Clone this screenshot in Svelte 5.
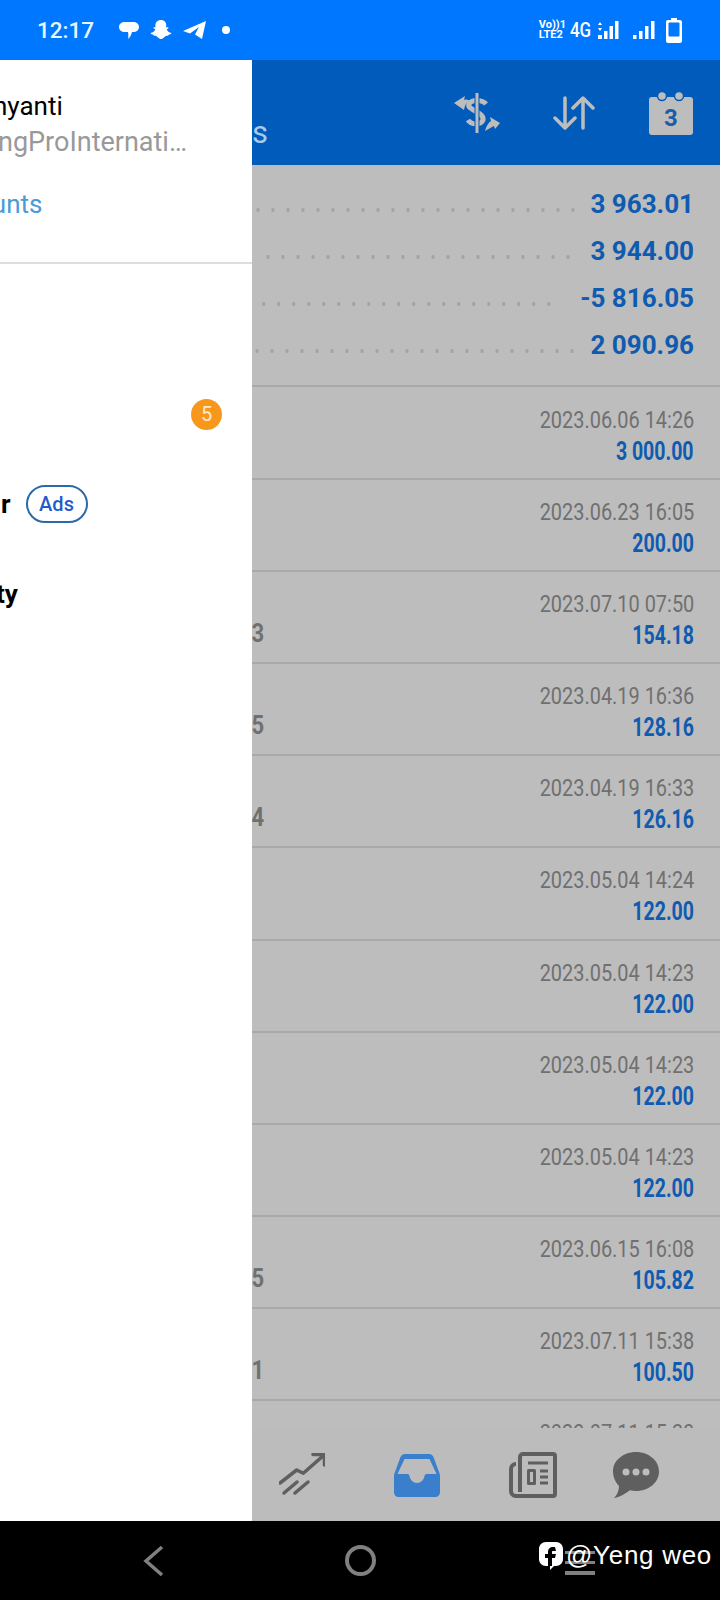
<script>
	const summary = [
		{ value: '3 963.01', gap: 10 },
		{ value: '3 944.00', gap: 15 },
		{ value: '-5 816.05', gap: 24 },
		{ value: '2 090.96', gap: 11 }
	];

	const deals = [
		{ tail: '', date: '2023.06.06 14:26', amount: '3 000.00' },
		{ tail: '', date: '2023.06.23 16:05', amount: '200.00' },
		{ tail: '3', date: '2023.07.10 07:50', amount: '154.18' },
		{ tail: '5', date: '2023.04.19 16:36', amount: '128.16' },
		{ tail: '4', date: '2023.04.19 16:33', amount: '126.16' },
		{ tail: '', date: '2023.05.04 14:24', amount: '122.00' },
		{ tail: '', date: '2023.05.04 14:23', amount: '122.00' },
		{ tail: '', date: '2023.05.04 14:23', amount: '122.00' },
		{ tail: '', date: '2023.05.04 14:23', amount: '122.00' },
		{ tail: '5', date: '2023.06.15 16:08', amount: '105.82' },
		{ tail: '1', date: '2023.07.11 15:38', amount: '100.50' },
		{ tail: '', date: '2023.07.11 15:20', amount: '' }
	];
</script>

<div class="phone">
	<header class="status">
		<span class="time">12:17</span>
		<svg class="note" width="20" height="19" viewBox="0 0 20 19"><path d="M6 1h8c3.500 0 6 2 6 5s-2.500 5-6 5h-1c-.5 2.500-1.700 5-4 7 .5-2 .5-5 0-7H6c-3.500 0-6-2-6-5s2.500-5 6-5z" fill="#fff"/></svg>
		<svg class="note" width="22" height="20" viewBox="0 0 23 21"><path d="M11.500 0c3.500 0 5.500 2.500 5.500 5.500V8l2-.5c.8.500.3 1.500-1.500 2.200.5 2 2.500 3.500 5 4-.3 1.300-2 1.500-3 1.800-.3 1.300-1 1-2.500 1-1.500.3-3 3.500-5.500 3.500s-4-3.200-5.500-3.500c-1.500 0-2.200.3-2.500-1-1-.3-2.700-.5-3-1.800 2.500-.5 4.500-2 5-4C3.300 8.500 2.800 7.500 3.600 7.500l2 .5V5.500C5.600 2.500 8 0 11.500 0z" fill="#fff"/></svg>
		<svg class="note" width="23" height="19" viewBox="0 0 23 19"><path d="M23 0L19 18l-7-4.500 4-7.500-9 6.500L0 10z" fill="#fff"/></svg>
		<i class="dot"></i>
		<span class="spacer"></span>
		<span class="volte"><span>Vo))1</span><span>LTE2</span></span>
		<span class="net">4G</span>
		<svg width="22" height="20" viewBox="0 0 22 20"><g fill="#fff"><path d="M1 5l2-3 2 3zM1 8l2 3 2-3z"/><rect x="1" y="15" width="4" height="4"/><rect x="7" y="11" width="3.500" height="8"/><rect x="12.500" y="6" width="3.500" height="13"/><rect x="18" y="1" width="3.500" height="18"/></g></svg>
		<svg class="sim2" width="22" height="20" viewBox="0 0 22 20"><g fill="#fff"><rect x="0" y="15" width="3.500" height="4"/><rect x="6" y="11" width="3.500" height="8"/><rect x="12" y="6" width="3.500" height="13"/><rect x="18" y="1" width="3.500" height="18"/></g></svg>
		<svg class="battery" width="16" height="25" viewBox="0 0 16 25"><path d="M5 0h6v2h3a2 2 0 0 1 2 2v19a2 2 0 0 1-2 2H2a2 2 0 0 1-2-2V4a2 2 0 0 1 2-2h3z" fill="#fff"/><rect x="2.500" y="4.500" width="11" height="14" rx="1" fill="#0077ff"/></svg>
	</header>

	<div class="body">
		<main class="screen">
			<div class="toolbar">
				<span class="title">s</span>
				<svg class="tool" width="46" height="40" viewBox="0 0 46 40" fill="none">
					<path d="M32 11c-3-4-14-5-17 0-3 6 16 8 14 16-2 5-12 5-15 0" stroke="#bdbdbd" stroke-width="5"/>
					<path d="M23 0v40" stroke="#005bbb" stroke-width="5"/>
					<path d="M23 0v40" stroke="#bdbdbd" stroke-width="3"/>
					<path d="M0 10L11 3l-1 4c3-1 5 0 6 2-3 0-5 2-6 8z" fill="#bdbdbd"/>
					<path d="M46 30l-10-6 1 4c-3 2-5 6-6 10 4-2 6-4 9-5l1 3z" fill="#bdbdbd"/>
				</svg>
				<svg class="tool arrows" width="42" height="34" viewBox="0 0 42 34" fill="none" stroke="#bdbdbd" stroke-width="3.500" stroke-linecap="round" stroke-linejoin="round">
					<path d="M12 2v30M2 22l10 10 10-10"/>
					<path d="M30 32V2M20 12L30 2l10 10"/>
				</svg>
				<svg class="tool cal" width="44" height="44" viewBox="0 0 44 44">
					<rect x="0" y="6" width="44" height="38" rx="3" fill="#bdbdbd"/>
					<circle cx="13" cy="5" r="4.500" fill="#bdbdbd" stroke="#005bbb" stroke-width="1.500"/>
					<circle cx="30" cy="5" r="4.500" fill="#bdbdbd" stroke="#005bbb" stroke-width="1.500"/>
					<text x="22" y="35" text-anchor="middle" class="cal-day">3</text>
				</svg>
			</div>

			<section class="summary">
				{#each summary as row}
					<div class="sum-row">
						<span class="dots" style="margin-right:{row.gap}px"></span>
						<span class="sum-value">{row.value}</span>
					</div>
				{/each}
			</section>

			<section class="list">
				{#each deals as deal}
					<div class="deal">
						<span class="tail">{deal.tail}</span>
						<div class="deal-right">
							<span class="date">{deal.date}</span>
							<span class="amount">{deal.amount}</span>
						</div>
					</div>
				{/each}
			</section>

			<nav class="tabs">
				<svg width="46" height="44" viewBox="-1 0 46 44" fill="none" stroke="#5f5f5f" stroke-width="3.500" stroke-linecap="round" stroke-linejoin="round">
					<path d="M0 30l16.700-13 6.600 3.300L44 2M33 1.500h11.500V12"/>
					<path d="M17 29L4 40M28 29L15 40"/>
				</svg>
				<svg class="active" width="46" height="44" viewBox="0 0 46 44">
					<path fill-rule="evenodd" d="M11 1h24c2 0 3.500 1 4.500 3L45 19c.7 1.500 1 3 1 4v16c0 3-2 5-5 5H5c-3 0-5-2-5-5V23c0-1 .3-2.500 1-4L6.500 4C7.500 2 9 1 11 1zm-.5 5L3.500 21H13c1.500 0 2 .5 2.500 2 .8 4 3.500 7 7.500 7s6.700-3 7.500-7c.5-1.500 1-2 2.500-2h9.500L35.500 6z" fill="#3a7fcc"/>
				</svg>
				<svg width="48" height="46" viewBox="0 0 48 46" fill="none" stroke="#5f5f5f" stroke-width="4" stroke-linejoin="round">
					<path d="M11 40V5a3 3 0 0 1 3-3h30a2 2 0 0 1 2 2v38a2 2 0 0 1-2 2H7a5 5 0 0 1-5-5V17a5 5 0 0 1 5-5"/>
					<path d="M19 11h20M31 19h8M31 25h8M31 31h8" stroke-width="3"/>
					<rect x="19.500" y="18.500" width="6" height="13" stroke-width="3"/>
				</svg>
				<svg class="chat" width="46" height="46" viewBox="0 0 46 46">
					<path d="M23 0c12.700 0 23 8.500 23 19.500S35.700 39 23 39c-2 0-4-.2-6-.7C13 41 8 45 1 46c3-3 5-7 5-12C2.500 30.500 0 25 0 19.500 0 8.500 10.300 0 23 0z" fill="#5f5f5f"/>
					<circle cx="13" cy="20" r="3.500" fill="#bdbdbd"/>
					<circle cx="23" cy="20" r="3.500" fill="#bdbdbd"/>
					<circle cx="33" cy="20" r="3.500" fill="#bdbdbd"/>
				</svg>
			</nav>
		</main>

		<aside class="drawer">
			<div class="name">nyanti</div>
			<div class="server">ngProInternati…</div>
			<div class="accounts">ounts</div>
			<hr />
			<div class="badge">5</div>
			<div class="ads-row"><b>r</b><span class="ads">Ads</span></div>
			<b class="last">ty</b>
		</aside>
	</div>

	<footer class="navbar">
		<svg class="back" width="24" height="32" viewBox="0 0 24 32" fill="none" stroke="#808080" stroke-width="3.500"><path d="M21 2L5 16l16 14"/></svg>
		<i class="home"></i>
		<span class="recents"></span>
		<span class="mark">
			<svg width="26" height="30" viewBox="0 0 26 30"><path fill-rule="evenodd" d="M8 1h10c4 0 7 3 7 7v10c0 4-3 7-7 7h-2l-4 4v-4H8c-4 0-7-3-7-7V8c0-4 3-7 7-7zm9 5h-2c-3 0-5 2-5 5v2H7v4h3v8h4v-8h3l1-4h-4v-2c0-.7.300-1 1-1h3z" fill="#fff"/></svg>
			@Yeng weo
		</span>
	</footer>
</div>

<style>
	:global(body) {
		margin: 0;
		background: #000;
	}

	.phone {
		width: 720px;
		height: 1600px;
		display: flex;
		flex-direction: column;
		overflow: hidden;
		font-family: Roboto, sans-serif;
	}

	.status {
		height: 60px;
		flex: none;
		background: #0077ff;
		display: flex;
		align-items: center;
		padding: 0 38px 0 37px;
		color: #fff;
		box-sizing: border-box;
	}

	.time {
		font-size: 22.500px;
		font-weight: 500;
		width: 57px;
		margin-right: 25px;
		color: #e9f6ff;
		white-space: nowrap;
	}

	.note {
		margin-right: 11px;
	}

	.dot {
		width: 8px;
		height: 8px;
		border-radius: 50%;
		background: #fff;
		margin-left: 5px;
	}

	.spacer {
		flex: 1;
	}

	.volte {
		display: flex;
		flex-direction: column;
		font-size: 11px;
		font-weight: 700;
		line-height: 10.500px;
		margin-right: 2px;
	}

	.net {
		font-size: 20px;
		font-weight: 500;
		margin-right: 4px;
		transform: scaleX(0.85);
	}

	.sim2 {
		margin-left: 14px;
		margin-right: 11px;
	}

	.body {
		flex: 1;
		position: relative;
		min-height: 0;
	}

	.screen {
		height: 100%;
		display: flex;
		flex-direction: column;
		background: #bdbdbd;
	}

	.toolbar {
		height: 105px;
		flex: none;
		background: #005bbb;
		display: flex;
		align-items: center;
		padding-right: 27px;
		box-sizing: border-box;
	}

	.title {
		margin-left: 252px;
		margin-right: auto;
		align-self: flex-end;
		font-size: 31px;
		line-height: 32px;
		padding-bottom: 16px;
		color: #a9cbea;
	}

	.arrows {
		margin-left: 53px;
	}

	.cal {
		margin-left: 54px;
	}

	.cal-day {
		font: 700 24px Roboto, sans-serif;
		fill: #1a5da8;
	}

	.summary {
		height: 222px;
		flex: none;
		box-sizing: border-box;
		padding: 15px 26px 0 255px;
		border-bottom: 2px solid #a9a9a9;
	}

	.sum-row {
		height: 47px;
		display: flex;
		align-items: center;
	}

	.dots {
		flex: 1;
		height: 4px;
		margin-top: 12px;
		background: radial-gradient(circle at center, #a3a3a3 1.700px, transparent 2px) right center / 15px 4px repeat-x;
	}

	.sum-value {
		font-size: 26px;
		font-weight: 700;
		color: #0f5bb0;
		white-space: nowrap;
	}

	.list {
		flex: 1;
		min-height: 0;
		overflow: hidden;
		padding-top: 1px;
	}

	.deal {
		height: 92.100px;
		box-sizing: border-box;
		border-bottom: 2px solid #a9a9a9;
		display: flex;
		justify-content: space-between;
		padding-right: 26px;
	}

	.tail {
		width: 264px;
		text-align: right;
		font-size: 25px;
		font-weight: 700;
		color: #707070;
		align-self: flex-end;
		padding-bottom: 14px;
		transform: scaleX(0.88);
		transform-origin: right;
	}

	.deal-right {
		display: flex;
		flex-direction: column;
		align-items: flex-end;
		padding-top: 17px;
	}

	.date {
		font-size: 24px;
		line-height: 30px;
		color: #707070;
		transform: scaleX(0.83);
		transform-origin: right;
		white-space: nowrap;
	}

	.amount {
		font-size: 25px;
		line-height: 33px;
		font-weight: 700;
		color: #0f5bb0;
		transform: scaleX(0.78);
		transform-origin: right;
		white-space: nowrap;
		min-height: 33px;
	}

	.tabs {
		height: 93px;
		flex: none;
		background: #bcbcbc;
		display: flex;
		align-items: center;
		padding-left: 279px;
		gap: 69px;
	}

	.chat {
		margin-left: -13px;
	}

	.drawer {
		position: absolute;
		inset: 0 auto 0 0;
		width: 252px;
		background: #fff;
		overflow: hidden;
		display: flex;
		flex-direction: column;
	}

	.name {
		margin: 30px 0 0 -7px;
		font-size: 26px;
		line-height: 32px;
		color: #000;
		white-space: nowrap;
	}

	.server {
		margin: 4px 0 0 -2px;
		font-size: 27px;
		line-height: 32px;
		color: #999;
		white-space: nowrap;
	}

	.accounts {
		margin: 30px 0 0 -23px;
		font-size: 26px;
		line-height: 32px;
		color: #4a9ad8;
		white-space: nowrap;
	}

	hr {
		margin: 42px 0 0;
		width: 100%;
		height: 2px;
		border: 0;
		background: #ddd;
	}

	.badge {
		align-self: flex-end;
		margin: 135px 30px 0 0;
		width: 31px;
		height: 31px;
		border-radius: 50%;
		background: #f7981d;
		color: #ffe9c6;
		font-size: 20px;
		line-height: 31px;
		text-align: center;
	}

	.ads-row {
		display: flex;
		align-items: center;
		margin-top: 55px;
		height: 38px;
		gap: 15px;
	}

	b {
		font-size: 26px;
		font-weight: 700;
		color: #000;
	}

	.ads-row b {
		margin-left: 1px;
	}

	.ads {
		box-sizing: border-box;
		width: 62px;
		height: 38px;
		border: 2px solid #2a6aa8;
		border-radius: 19px;
		color: #1f5cc8;
		font-size: 20px;
		font-weight: 500;
		line-height: 34px;
		text-align: center;
	}

	.last {
		margin: 55px 0 0 -4px;
		line-height: 32px;
	}

	.navbar {
		height: 79px;
		flex: none;
		background: #000;
		position: relative;
		display: flex;
		align-items: center;
	}

	.back {
		margin-left: 141px;
	}

	.home {
		box-sizing: border-box;
		width: 31px;
		height: 31px;
		border: 4px solid #808080;
		border-radius: 50%;
		margin-left: 180px;
	}

	.recents {
		box-sizing: border-box;
		width: 30px;
		height: 24px;
		margin: 4px 0 0 189px;
		background: repeating-linear-gradient(#808080 0 3px, transparent 3px 10px);
		border-bottom: 3px solid #808080;
	}

	.mark {
		position: absolute;
		left: 538px;
		top: 19px;
		display: flex;
		align-items: center;
		gap: 2px;
		color: #fff;
		font: 400 26px "Liberation Sans", sans-serif;
		letter-spacing: 0.7px;
		white-space: nowrap;
	}
</style>
